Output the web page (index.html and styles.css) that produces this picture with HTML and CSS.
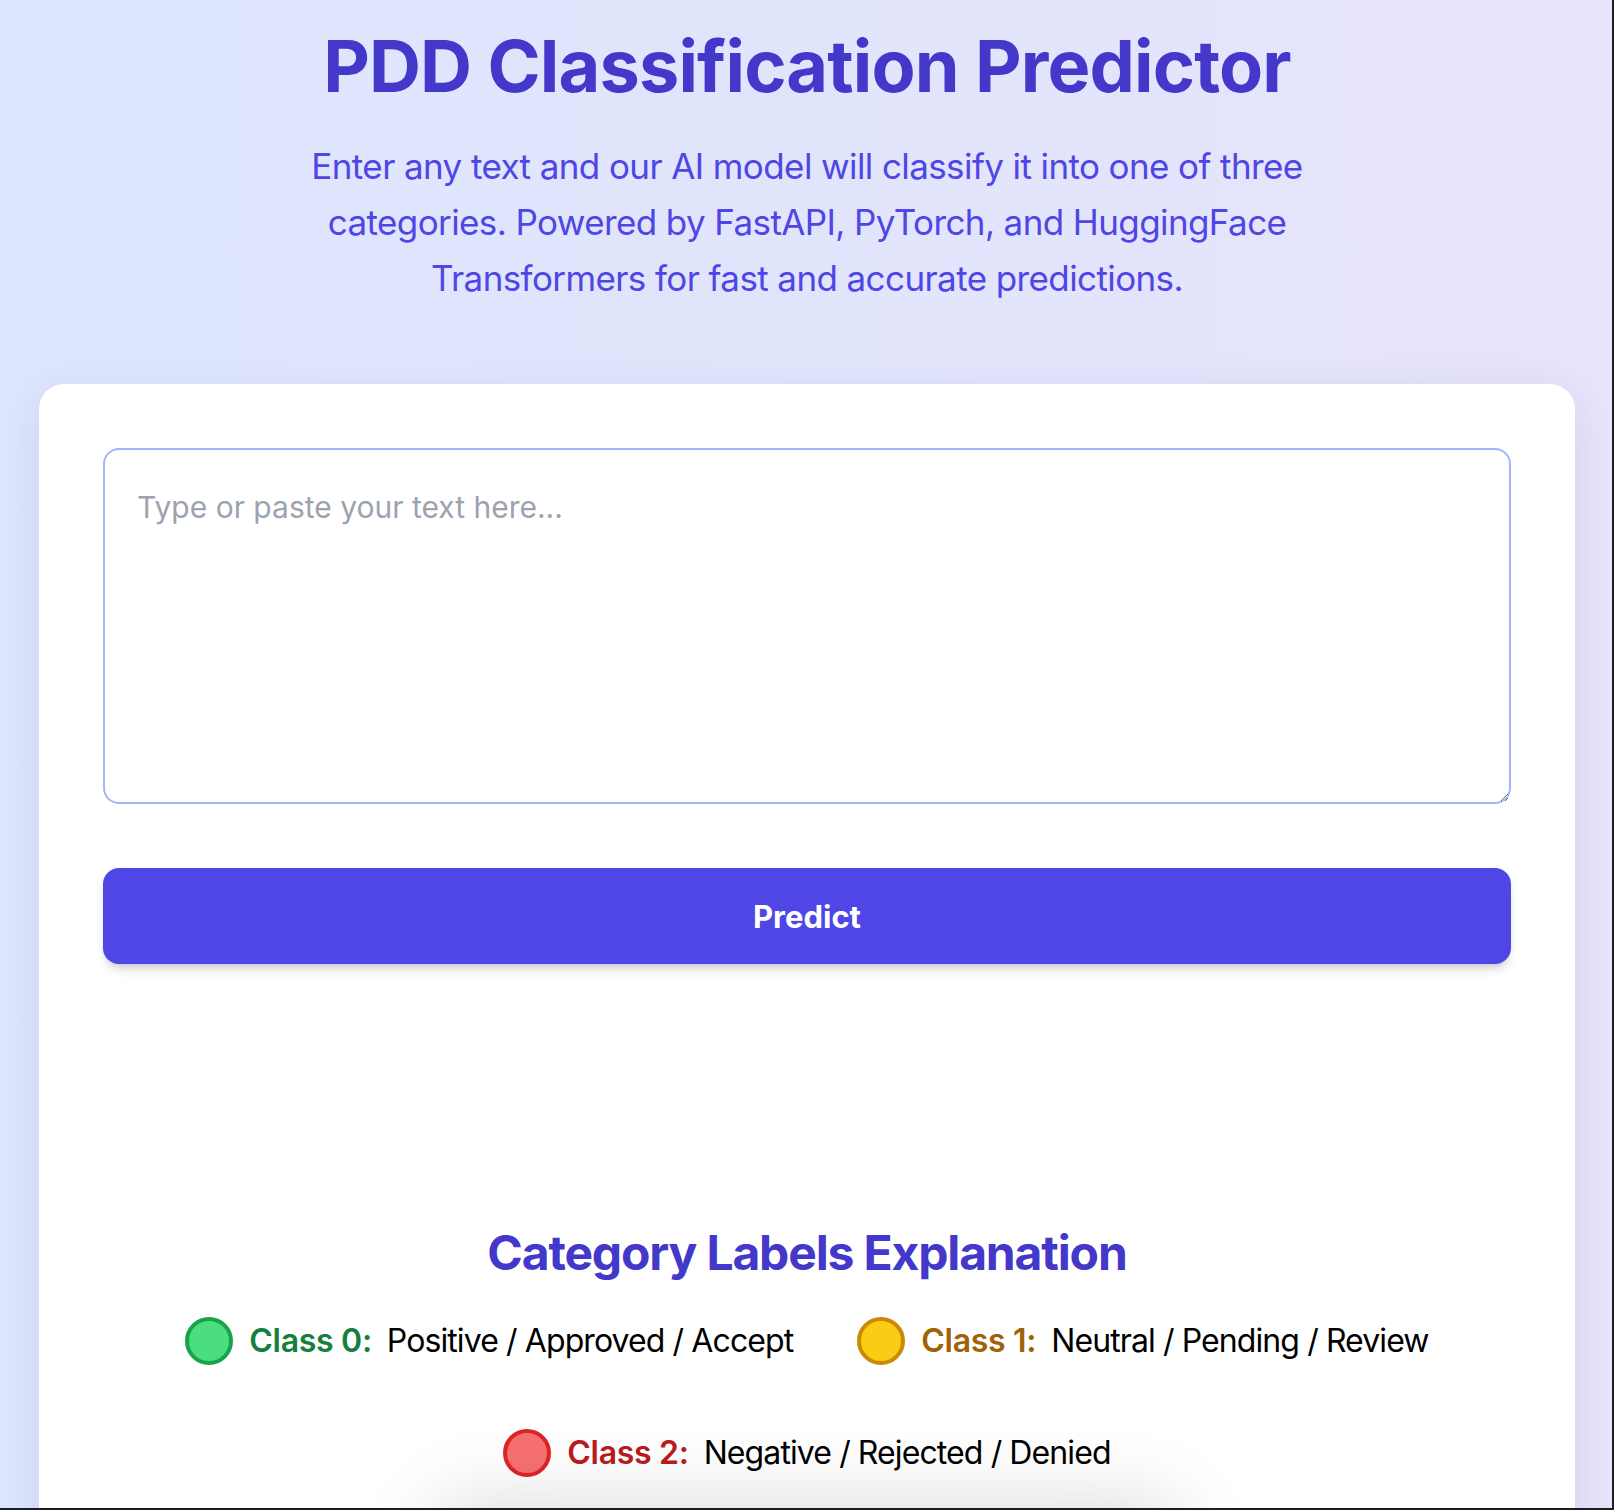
FILE: index.html
```html
<!DOCTYPE html>
<html lang="en">
<head>
<meta charset="utf-8">
<title>PDD Classification Predictor</title>
<link rel="stylesheet" href="styles.css">
</head>
<body>
<div class="frame"></div>
<main class="page">
  <header class="hero">
    <h1 class="title">PDD Classification Predictor</h1>
    <p class="subtitle">Enter any text and our AI model will classify it into one of three categories. Powered by FastAPI, PyTorch, and HuggingFace Transformers for fast and accurate predictions.</p>
  </header>
  <section class="card">
    <textarea class="input" placeholder="Type or paste your text here..."></textarea>
    <button class="predict" type="button">Predict</button>
    <div class="result"></div>
    <h2 class="legend-title">Category Labels Explanation</h2>
    <ul class="legend">
      <li class="legend-item"><span class="dot dot-green"></span><span class="cls cls-green">Class 0:</span><span class="desc">Positive / Approved / Accept</span></li>
      <li class="legend-item"><span class="dot dot-yellow"></span><span class="cls cls-yellow">Class 1:</span><span class="desc">Neutral / Pending / Review</span></li>
      <li class="legend-item"><span class="dot dot-red"></span><span class="cls cls-red">Class 2:</span><span class="desc">Negative / Rejected / Denied</span></li>
    </ul>
    <div class="footer-card"></div>
  </section>
</main>
</body>
</html>
```

FILE: styles.css
```css
* { box-sizing: border-box; }

html, body {
  margin: 0;
  padding: 0;
}

body {
  font-family: Inter, "Noto Sans", "Liberation Sans", sans-serif;
  background: linear-gradient(to right, #dde6fd 0%, #e1e5fc 50%, #e7e4fb 100%);
  min-height: 1510px;
  overflow: hidden;
}

.frame {
  position: fixed;
  inset: 0;
  border-right: 2px solid #1e1e22;
  border-bottom: 2px solid #1e1e22;
  pointer-events: none;
  z-index: 10;
}

.page {
  padding-top: 26px;
  display: flex;
  flex-direction: column;
  align-items: center;
}

.hero {
  display: flex;
  flex-direction: column;
  align-items: center;
  text-align: center;
}

.title {
  margin: 0;
  font-size: 72px;
  line-height: 80px;
  font-weight: 700;
  color: #4338ca;
  letter-spacing: -0.85px;
}

.subtitle {
  margin: 32px 0 0;
  max-width: 1024px;
  font-size: 35px;
  line-height: 56px;
  letter-spacing: -0.6px;
  color: #4f46e5;
}

.card {
  margin-top: 78px;
  width: 1536px;
  background: #fff;
  border-radius: 25px;
  padding: 64px;
  box-shadow: 0 10px 40px rgba(70, 70, 140, 0.12);
  display: flex;
  flex-direction: column;
}

.input {
  display: block;
  width: 100%;
  height: 356px;
  border: 2px solid #a5b4fc;
  border-radius: 16px;
  padding: 32px;
  font-family: inherit;
  font-size: 30px;
  line-height: 51px;
  color: #111827;
  resize: vertical;
  outline: none;
}

.input::placeholder {
  color: #9ca3af;
}

.predict {
  margin-top: 64px;
  height: 96px;
  width: 100%;
  border: none;
  border-radius: 16px;
  background: #4f46e5;
  color: #fff;
  font-family: inherit;
  font-size: 31px;
  font-weight: 700;
  box-shadow: 0 8px 12px -4px rgba(0, 0, 0, 0.18), 0 3px 6px -3px rgba(0, 0, 0, 0.12);
}

.result {
  height: 257px;
}

.legend-title {
  margin: 0;
  text-align: center;
  font-size: 48px;
  line-height: 64px;
  font-weight: 700;
  color: #4338ca;
  letter-spacing: -1.15px;
}

.legend {
  list-style: none;
  margin: 32px 0 0;
  padding: 0;
  display: flex;
  flex-wrap: wrap;
  justify-content: center;
  column-gap: 64px;
  row-gap: 64px;
}

.legend-item {
  display: flex;
  align-items: center;
  font-size: 32px;
  line-height: 48px;
}

.dot {
  width: 48px;
  height: 48px;
  border-radius: 50%;
  border: 4px solid;
  margin-right: 16px;
  flex: none;
}

.dot-green { background: #4ade80; border-color: #16a34a; }
.dot-yellow { background: #facc15; border-color: #ca8a04; }
.dot-red { background: #f87171; border-color: #dc2626; }

.cls {
  font-weight: 600;
  margin-right: 15px;
  letter-spacing: -0.3px;
}

.cls-green { color: #15803d; }
.cls-yellow { color: #a16207; }
.cls-red { color: #b91c1c; }

.desc {
  color: #000;
  letter-spacing: -0.9px;
}

.footer-card {
  margin: 40px auto 0;
  width: 720px;
  height: 200px;
  border-radius: 24px;
  box-shadow: 0 0 80px 14px rgba(0, 0, 0, 0.15);
}
```
